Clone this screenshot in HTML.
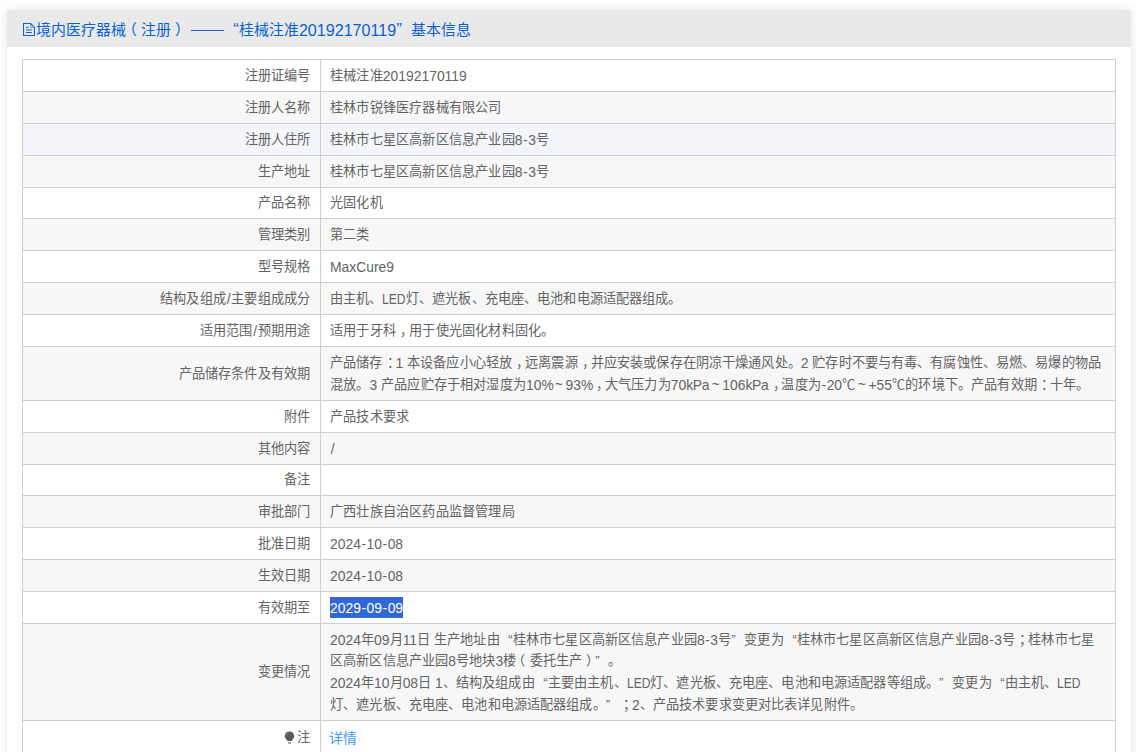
<!DOCTYPE html>
<html lang="zh-CN">
<head>
<meta charset="utf-8">
<style>
html,body{margin:0;padding:0;background:#fff;}
body{width:1136px;height:752px;overflow:hidden;position:relative;font-family:"Liberation Sans",sans-serif;color:#646464;text-spacing-trim:space-all;}
.panel{position:absolute;left:7px;top:10px;width:1124px;height:800px;background:#fff;box-shadow:0 0 10px rgba(0,0,0,0.10);}
.hd{position:absolute;left:0;top:0;width:1124px;height:37px;background:#e9e9e9;border-bottom:1px solid #e4e7ef;box-sizing:border-box;}
.ttl{position:absolute;left:29px;top:9px;font-size:14.9px;line-height:20px;color:#0a62cf;white-space:nowrap;}
.ttl .ql,.ttl .qr{width:14.9px;font-size:17px;}
.ico{position:absolute;left:16px;top:13px;}
.dash{display:inline-block;width:33px;height:1px;background:#0a62cf;vertical-align:4.5px;margin:0 0 0 5px;}
table{position:absolute;left:15px;top:49px;width:1094px;border-collapse:separate;border-spacing:0;border-right:1px solid #cfcfcf;border-bottom:1px solid #cfcfcf;box-sizing:border-box;font-size:13.2px;line-height:21.6px;}
td{letter-spacing:0.2px;border-top:1px solid #cfcfcf;border-left:1px solid #cfcfcf;padding:0 9.5px;vertical-align:middle;white-space:nowrap;}
td.l{width:278px;text-align:right;}
tr.g td{background:#f7f7f7;}
tr.h td{background:#f3f5fa;}
.e{font-size:13.9px;position:relative;top:1px;letter-spacing:0;}
.e i{font-style:normal;margin:0 0.5px;}
.e b{font-weight:normal;display:inline-block;transform:scaleX(0.87);transform-origin:0 0;margin-right:-3.5px;}
.e u{text-decoration:none;letter-spacing:-1.5px;}
.e s{text-decoration:none;letter-spacing:-0.37px;}
.ql,.qr{display:inline-block;width:13.2px;}
.ql{text-align:right;}
.qr{text-align:left;}
.pl{position:relative;left:-0.3em;}
.pr{position:relative;left:0.3em;}
.pc{position:relative;left:0.33em;}
.sel{background:#3367d6;color:#fff;display:inline-block;vertical-align:top;}
a{color:#3d9bfc;text-decoration:none;}
.bulb{display:inline-block;width:13px;vertical-align:-1px;}
.bulb svg{position:relative;left:1.5px;top:0.5px;}

.ttl .e{font-size:16.1px;top:1px;}
.ln8_1{letter-spacing:0.12px;}
.ln10_1{letter-spacing:0.12px;}
.ln10_2{letter-spacing:0.17px;}
.ln18_1{letter-spacing:0.14px;}
.ln18_2{letter-spacing:0.145px;}
.ln18_3{letter-spacing:0.13px;}
.ln18_4{letter-spacing:0.13px;}
.tl{display:inline-block;width:13.2px;text-align:center;letter-spacing:0;font-size:13.9px;}

.e em{font-style:normal;margin:0 0.7px;}
.nt{position:relative;top:2px;}
a{position:relative;top:2px;left:-1.5px;font-size:14px;letter-spacing:0;}
td.v{padding-left:9px;}

</style>
</head>
<body>
<div class="panel">
<div class="hd"><svg class="ico" width="13" height="14" viewBox="0 0 13 14"><path d="M0.5 0.5H7.6L11.5 4.4V12.5H0.5Z" fill="none" stroke="#0a62cf" stroke-width="1.1"/><path d="M7.6 1.2V4.4H10.8" fill="none" stroke="#0a62cf" stroke-width="0.8" opacity="0.7"/><path d="M3 4.3H5.6M3 6.9H8.8M3 9.5H8.8" stroke="#0a62cf" stroke-width="1"/></svg><div class="ttl">境内医疗器械<span class="pl">（</span>注册<span class="pr">）</span><span class="dash"></span><span class="ql">“</span>桂械注准<span class="e">20192170119</span><span class="qr">”</span>基本信息</div>
</div>
<table>
<tr><td class="l" style="height:31px">注册证编号</td><td class="v"><span class="ln1_1">桂械注准<span class="e">20192170119</span></span></td></tr>
<tr class="g"><td class="l" style="height:31px">注册人名称</td><td class="v"><span class="ln2_1">桂林市锐锋医疗器械有限公司</span></td></tr>
<tr class="h"><td class="l" style="height:31px">注册人住所</td><td class="v"><span class="ln3_1">桂林市七星区高新区信息产业园<span class="e">8<i>-</i>3</span>号</span></td></tr>
<tr class="g"><td class="l" style="height:31px">生产地址</td><td class="v"><span class="ln4_1">桂林市七星区高新区信息产业园<span class="e">8<i>-</i>3</span>号</span></td></tr>
<tr><td class="l" style="height:30px">产品名称</td><td class="v"><span class="ln5_1">光固化机</span></td></tr>
<tr class="g"><td class="l" style="height:31px">管理类别</td><td class="v"><span class="ln6_1">第二类</span></td></tr>
<tr><td class="l" style="height:31px">型号规格</td><td class="v"><span class="ln7_1"><span class="e">MaxCure9</span></span></td></tr>
<tr class="g"><td class="l" style="height:31px">结构及组成<span class="e"><em>/</em></span>主要组成成分</td><td class="v"><span class="ln8_1">由主机、<span class="e"><b>LED</b></span>灯、遮光板、充电座、电池和电源适配器组成。</span></td></tr>
<tr><td class="l" style="height:31px">适用范围<span class="e"><em>/</em></span>预期用途</td><td class="v"><span class="ln9_1">适用于牙科<span class="pc">，</span>用于使光固化材料固化。</span></td></tr>
<tr class="g"><td class="l" style="height:53px">产品储存条件及有效期</td><td class="v"><span class="ln10_1">产品储存<span class="pc">：</span><span class="e">1</span> 本设备应小心轻放<span class="pc">，</span>远离震源<span class="pc">，</span>并应安装或保存在阴凉干燥通风处。<span class="e">2</span> 贮存时不要与有毒、有腐蚀性、易燃、易爆的物品</span><br><span class="ln10_2">混放。<span class="e">3</span> 产品应贮存于相对湿度为<span class="e">10<u>%</u></span><span class="tl">~</span><span class="e">93<u>%</u></span><span class="pc">，</span>大气压力为<span class="e">70<s>kPa</s></span><span class="tl">~</span><span class="e">106<s>kPa</s></span><span class="pc">，</span>温度为<span class="e"><i>-</i>20</span>℃<span class="tl">~</span><span class="e">+55</span>℃的环境下。产品有效期<span class="pc">：</span>十年。</span></td></tr>
<tr><td class="l" style="height:31px">附件</td><td class="v"><span class="ln11_1">产品技术要求</span></td></tr>
<tr class="g"><td class="l" style="height:31px">其他内容</td><td class="v"><span class="ln12_1"><span class="e"><em>/</em></span></span></td></tr>
<tr><td class="l" style="height:30px">备注</td><td class="v"><span class="ln13_1"></span></td></tr>
<tr class="g"><td class="l" style="height:31px">审批部门</td><td class="v"><span class="ln14_1">广西壮族自治区药品监督管理局</span></td></tr>
<tr><td class="l" style="height:31px">批准日期</td><td class="v"><span class="ln15_1"><span class="e">2024<i>-</i>10<i>-</i>08</span></span></td></tr>
<tr class="g"><td class="l" style="height:31px">生效日期</td><td class="v"><span class="ln16_1"><span class="e">2024<i>-</i>10<i>-</i>08</span></span></td></tr>
<tr><td class="l" style="height:31px">有效期至</td><td class="v"><span class="sel"><span class="e">2029<i>-</i>09<i>-</i>09</span></span></td></tr>
<tr class="g"><td class="l" style="height:96px">变更情况</td><td class="v"><span class="ln18_1"><span class="e">2024</span>年<span class="e">09</span>月<span class="e">11</span>日 生产地址由<span class="ql">“</span>桂林市七星区高新区信息产业园<span class="e">8<i>-</i>3</span>号<span class="qr">”</span>变更为<span class="ql">“</span>桂林市七星区高新区信息产业园<span class="e">8<i>-</i>3</span>号<span class="pc">；</span>桂林市七星</span><br><span class="ln18_2">区高新区信息产业园<span class="e">8</span>号地块<span class="e">3</span>楼<span class="pl">（</span>委托生产<span class="pr">）</span><span class="qr">”</span>。</span><br><span class="ln18_3"><span class="e">2024</span>年<span class="e">10</span>月<span class="e">08</span>日 <span class="e">1</span>、结构及组成由<span class="ql">“</span>主要由主机、<span class="e"><b>LED</b></span>灯、遮光板、充电座、电池和电源适配器等组成。<span class="qr">”</span>变更为<span class="ql">“</span>由主机、<span class="e"><b>LED</b></span></span><br><span class="ln18_4">灯、遮光板、充电座、电池和电源适配器组成。<span class="qr">”</span><span class="pc">；</span><span class="e">2</span>、产品技术要求变更对比表详见附件。</span></td></tr>
<tr><td class="l" style="height:31px"><span class="nt"><span class="bulb"><svg width="11" height="13" viewBox="0 0 11 13"><path d="M5.5 0.4C2.8 0.4 0.8 2.4 0.8 5c0 1.7 0.8 2.6 1.6 3.4 0.6 0.6 0.9 1 1 1.6h4.2c0.1-0.6 0.4-1 1-1.6 0.8-0.8 1.6-1.7 1.6-3.4C10.2 2.4 8.2 0.4 5.5 0.4z" fill="#5a5a5a"/><path d="M2.4 4.6C2.5 3.2 3.3 2.2 4.6 1.8" fill="none" stroke="#9a9a9a" stroke-width="0.8"/><path d="M4 11.9H7" stroke="#5a5a5a" stroke-width="1.1"/></svg></span>
注</span></td><td class="v"><a>详情</a></td></tr>
</table>
</div>
</body>
</html>
